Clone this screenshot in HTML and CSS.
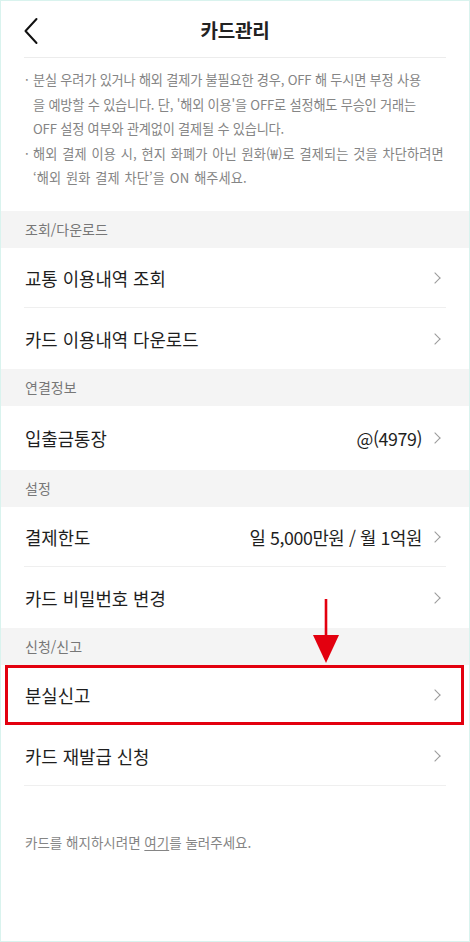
FILE: index.html
```html
<!DOCTYPE html>
<html lang="ko">
<head>
<meta charset="utf-8">
<link rel="stylesheet" href="styles.css">
</head>
<body>
<div class="frame">
  <header class="topbar">
    <svg class="back" width="16" height="28" viewBox="0 0 16 28"><path d="M13.5 2 L2.5 14 L13.5 26" fill="none" stroke="#111" stroke-width="2" stroke-linecap="round" stroke-linejoin="round"/></svg>
    <h1 class="title">카드관리</h1>
  </header>
  <div class="hr"></div>
  <ul class="notes">
    <li><span class="dot">·</span><span class="txt">분실 우려가 있거나 해외 결제가 불필요한 경우, OFF 해 두시면 부정 사용<br>을 예방할 수 있습니다. 단, '해외 이용'을 OFF로 설정해도 무승인 거래는<br>OFF 설정 여부와 관계없이 결제될 수 있습니다.</span></li>
    <li><span class="dot">·</span><span class="txt wide">해외 결제 이용 시, 현지 화폐가 아닌 원화(₩)로 결제되는 것을 차단하려면<br>‘해외 원화 결제 차단’을 ON 해주세요.</span></li>
  </ul>

  <div class="section">조회/다운로드</div>
  <div class="row"><span class="label">교통 이용내역 조회</span><span class="chev"></span></div>
  <div class="row last"><span class="label">카드 이용내역 다운로드</span><span class="chev"></span></div>

  <div class="section">연결정보</div>
  <div class="row last tall"><span class="label">입출금통장</span><span class="value">@(4979)</span><span class="chev"></span></div>

  <div class="section">설정</div>
  <div class="row"><span class="label">결제한도</span><span class="value">일 5,000만원 / 월 1억원</span><span class="chev"></span></div>
  <div class="row last"><span class="label">카드 비밀번호 변경</span><span class="chev"></span></div>

  <div class="section">신청/신고</div>
  <div class="row highlight"><span class="label">분실신고</span><span class="chev"></span></div>
  <div class="row"><span class="label">카드 재발급 신청</span><span class="chev"></span></div>

  <p class="footer">카드를 해지하시려면 <u>여기</u>를 눌러주세요.</p>

  <svg class="arrow" width="30" height="66" viewBox="0 0 30 66"><line x1="15" y1="0" x2="15" y2="42" stroke="#e3000f" stroke-width="2.6"/><path d="M2 36 L28 36 L15 64 Z" fill="#e3000f"/></svg>
</div>
</body>
</html>
```

FILE: styles.css
```css
* { box-sizing: border-box; }
html, body { margin: 0; padding: 0; background: #fff; }
body {
  font-family: "Noto Sans CJK KR", "Noto Sans", sans-serif;
  color: #222;
}
.frame {
  position: relative;
  width: 470px;
  height: 942px;
  border: 1.5px solid #d9f3ee;
  overflow: hidden;
}
.topbar {
  position: relative;
  height: 56px;
  display: flex;
  align-items: center;
  justify-content: center;
}
.back {
  position: absolute;
  left: 22px;
  top: 16px;
}
.title {
  margin: 0;
  font-size: 19px;
  font-weight: 700;
  color: #222;
  letter-spacing: -0.2px;
}
.hr {
  height: 1px;
  background: #ececec;
  margin: 0 23px;
}
.notes {
  list-style: none;
  margin: 0;
  padding: 10px 20px 20px 24px;
  font-size: 13.2px;
  line-height: 24.6px;
  color: #858585;
  letter-spacing: -0.2px;
}
.notes li { display: flex; }
.notes .txt { white-space: nowrap; }
.notes .wide { letter-spacing: 0.1px; word-spacing: 1px; }
.dot { width: 8px; flex: none; }
.section {
  height: 37px;
  background: #f4f4f4;
  display: flex;
  align-items: center;
  padding: 0 24px;
  font-size: 14px;
  color: #777;
}
.row {
  position: relative;
  height: 60.5px;
  display: flex;
  align-items: center;
  padding: 0 28px 0 24px;
  font-size: 17.8px;
  color: #1e1e1e;
}
.row.tall { height: 64px; }
.row::after {
  content: "";
  position: absolute;
  left: 23px;
  right: 23px;
  bottom: 0;
  height: 1px;
  background: #efefef;
}
.row.last::after { display: none; }
.label { flex: 1; }
.value { margin-right: 9px; letter-spacing: -0.4px; }
.chev {
  width: 8px;
  height: 8px;
  border-top: 1.3px solid #9a9a9a;
  border-right: 1.3px solid #9a9a9a;
  transform: rotate(45deg);
  margin-right: 2px;
}
.highlight::before {
  content: "";
  position: absolute;
  left: 4px;
  right: 5px;
  top: 0;
  bottom: 0;
  border: 3px solid #e3000f;
}
.highlight::after { display: none; }
.footer {
  margin: 46px 0 0 0;
  padding: 0 24px;
  font-size: 13.5px;
  color: #858585;
}
.footer u { text-underline-offset: 2px; }
.arrow {
  position: absolute;
  left: 310px;
  top: 598px;
}
```
